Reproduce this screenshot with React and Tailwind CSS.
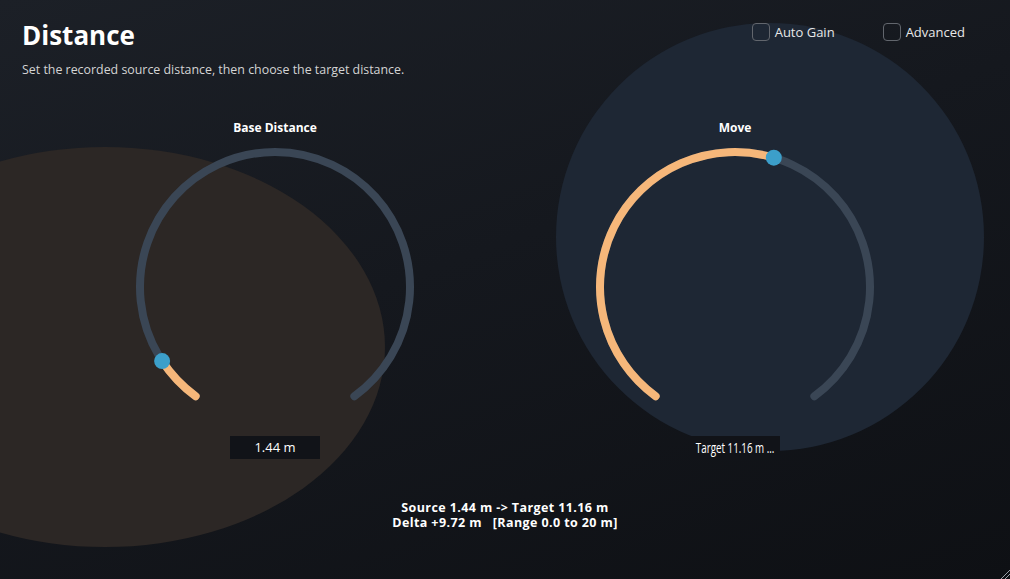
import React from "react";

const START = 126;
const SWEEP = 288;
const R = 135;
const C = 145;

function pt(deg) {
  const a = (deg * Math.PI) / 180;
  return [C + R * Math.cos(a), C + R * Math.sin(a)];
}

function arc(from, to) {
  const [x1, y1] = pt(from);
  const [x2, y2] = pt(to);
  const large = to - from > 180 ? 1 : 0;
  return `M ${x1} ${y1} A ${R} ${R} 0 ${large} 1 ${x2} ${y2}`;
}

function Knob({ label, value, max, readout, narrow }) {
  const end = START + SWEEP * (value / max);
  const [tx, ty] = pt(end);
  return (
    <div className="flex flex-col items-center">
      <div className="text-[12px] font-bold leading-4 text-white">{label}</div>
      <svg width="290" height="290" viewBox="0 0 290 290" className="mt-[6px]">
        <path d={arc(START, START + SWEEP)} fill="none" stroke="#3a4655" strokeWidth="8" strokeLinecap="round" />
        <path d={arc(START, end)} fill="none" stroke="#f6b77a" strokeWidth="8" strokeLinecap="round" />
        <circle cx={tx} cy={ty} r="8" fill="#3c9fca" />
      </svg>
      <div className="mt-[4px] flex h-[23px] w-[90px] items-center justify-center overflow-hidden bg-[#111318] text-white">
        {narrow ? (
          <span className="inline-block shrink-0 origin-center scale-x-[0.7] whitespace-nowrap text-[14px] leading-4">
            {readout}
          </span>
        ) : (
          <span className="text-[13px]">{readout}</span>
        )}
      </div>
    </div>
  );
}

function Check({ label }) {
  return (
    <label className="flex items-center gap-[5px] text-[13px] leading-[18px] text-[#e8e8e8]">
      <span className="h-[18px] w-[18px] rounded-[4px] border-[1.5px] border-[#62666d]" />
      {label}
    </label>
  );
}

export default function App() {
  return (
    <div className="relative h-[579px] w-full overflow-hidden bg-[linear-gradient(160deg,#1c2027_0%,#15181e_45%,#0e1014_100%)] [font-family:'Open_Sans',sans-serif]">
      <div className="absolute left-[-175px] top-[147px] h-[400px] w-[560px] rounded-[50%] bg-[#2c2725]" />
      <div className="absolute left-[556px] top-[23px] h-[428px] w-[428px] rounded-full bg-[#1e2734]" />

      <div className="relative">
        <div className="flex items-start justify-between pl-[22px] pr-[45px] pt-[19px]">
          <div>
            <h1 className="text-[26px] font-bold leading-8 text-white">Distance</h1>
            <p className="mt-[11px] text-[12.4px] leading-4 text-[#d4d4d4]">
              Set the recorded source distance, then choose the target distance.
            </p>
          </div>
          <div className="flex gap-[48px] pt-[4px]">
            <Check label="Auto Gain" />
            <Check label="Advanced" />
          </div>
        </div>

        <div className="mt-[42px] grid grid-cols-2 px-[45px]">
          <Knob label="Base Distance" value={1.44} max={20} readout="1.44 m" />
          <Knob label="Move" value={11.16} max={20} readout="Target 11.16 m ..." narrow />
        </div>

        <div className="mt-[41px] text-center text-[12.5px] font-bold leading-[15px] tracking-[0.4px] text-white">
          <div>Source 1.44 m -&gt; Target 11.16 m</div>
          <div className="whitespace-pre">Delta +9.72 m   [Range 0.0 to 20 m]</div>
        </div>
      </div>

      <svg className="absolute bottom-0 right-0" width="12" height="12" viewBox="0 0 12 12">
        <path d="M12 3 L3 12 M12 7 L7 12" stroke="#9aa0a8" strokeWidth="1" />
      </svg>
    </div>
  );
}
